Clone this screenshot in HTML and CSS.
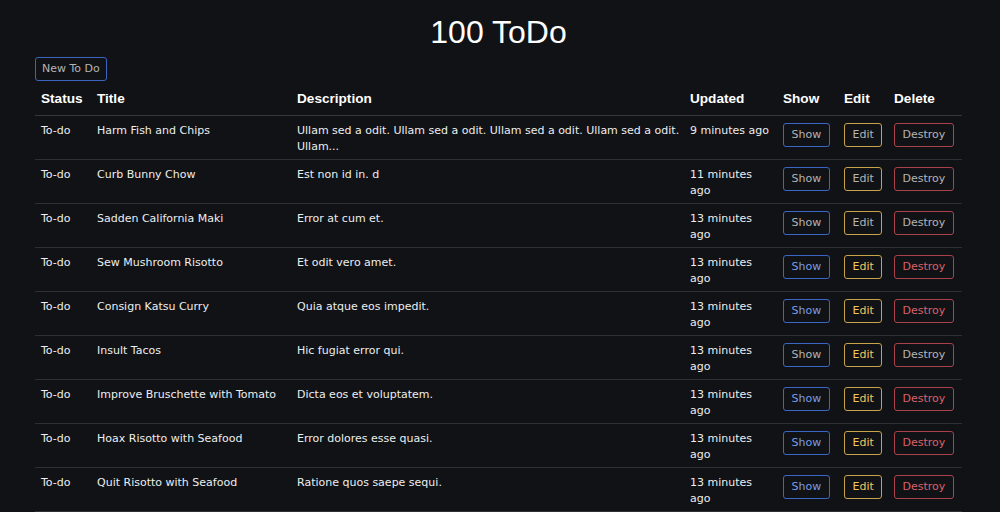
FILE: index.html
```html
<!DOCTYPE html>
<html lang="en">
<head>
<meta charset="utf-8">
<title>100 ToDo</title>
<link rel="stylesheet" href="styles.css">
</head>
<body>
<main class="container">
  <h1 class="page-title">100 ToDo</h1>
  <a class="btn btn-new" href="#">New To Do</a>
  <table class="todo-table">
    <colgroup>
      <col class="c-status"><col class="c-title"><col class="c-desc"><col class="c-upd"><col class="c-show"><col class="c-edit"><col class="c-del">
    </colgroup>
    <thead>
      <tr><th>Status</th><th>Title</th><th>Description</th><th>Updated</th><th>Show</th><th>Edit</th><th>Delete</th></tr>
    </thead>
    <tbody>
      <tr><td>To-do</td><td>Harm Fish and Chips</td><td class="desc">Ullam sed a odit. Ullam sed a odit. Ullam sed a odit. Ullam sed a odit. Ullam...</td><td>9 minutes ago</td>
        <td><a class="btn btn-blue" href="#">Show</a></td><td><a class="btn btn-yellow" href="#">Edit</a></td><td><a class="btn btn-red" href="#">Destroy</a></td></tr>
      <tr><td>To-do</td><td>Curb Bunny Chow</td><td class="desc">Est non id in. d</td><td>11 minutes ago</td>
        <td><a class="btn btn-blue" href="#">Show</a></td><td><a class="btn btn-yellow" href="#">Edit</a></td><td><a class="btn btn-red" href="#">Destroy</a></td></tr>
      <tr><td>To-do</td><td>Sadden California Maki</td><td class="desc">Error at cum et.</td><td>13 minutes ago</td>
        <td><a class="btn btn-blue" href="#">Show</a></td><td><a class="btn btn-yellow" href="#">Edit</a></td><td><a class="btn btn-red" href="#">Destroy</a></td></tr>
      <tr><td>To-do</td><td>Sew Mushroom Risotto</td><td class="desc">Et odit vero amet.</td><td>13 minutes ago</td>
        <td><a class="btn btn-blue lit" href="#">Show</a></td><td><a class="btn btn-yellow lit" href="#">Edit</a></td><td><a class="btn btn-red lit" href="#">Destroy</a></td></tr>
      <tr><td>To-do</td><td>Consign Katsu Curry</td><td class="desc">Quia atque eos impedit.</td><td>13 minutes ago</td>
        <td><a class="btn btn-blue lit" href="#">Show</a></td><td><a class="btn btn-yellow lit" href="#">Edit</a></td><td><a class="btn btn-red lit" href="#">Destroy</a></td></tr>
      <tr><td>To-do</td><td>Insult Tacos</td><td class="desc">Hic fugiat error qui.</td><td>13 minutes ago</td>
        <td><a class="btn btn-blue" href="#">Show</a></td><td><a class="btn btn-yellow lit" href="#">Edit</a></td><td><a class="btn btn-red" href="#">Destroy</a></td></tr>
      <tr><td>To-do</td><td>Improve Bruschette with Tomato</td><td class="desc">Dicta eos et voluptatem.</td><td>13 minutes ago</td>
        <td><a class="btn btn-blue lit" href="#">Show</a></td><td><a class="btn btn-yellow lit" href="#">Edit</a></td><td><a class="btn btn-red lit" href="#">Destroy</a></td></tr>
      <tr><td>To-do</td><td>Hoax Risotto with Seafood</td><td class="desc">Error dolores esse quasi.</td><td>13 minutes ago</td>
        <td><a class="btn btn-blue lit" href="#">Show</a></td><td><a class="btn btn-yellow lit" href="#">Edit</a></td><td><a class="btn btn-red lit" href="#">Destroy</a></td></tr>
      <tr><td>To-do</td><td>Quit Risotto with Seafood</td><td class="desc">Ratione quos saepe sequi.</td><td>13 minutes ago</td>
        <td><a class="btn btn-blue lit" href="#">Show</a></td><td><a class="btn btn-yellow lit" href="#">Edit</a></td><td><a class="btn btn-red lit" href="#">Destroy</a></td></tr>
    </tbody>
  </table>
</main>
</body>
</html>
```
FILE: styles.css
```css
html, body {
  margin: 0;
  padding: 0;
  background: #111215;
  color: #eceef0;
  font-family: "DejaVu Sans", Verdana, sans-serif;
  font-size: 11px;
  line-height: 16px;
}

.container {
  width: 927px;
  margin: 0 0 0 35px;
}

.page-title {
  margin: 14px 0 0;
  font-family: "Liberation Sans", Arial, sans-serif;
  font-weight: 400;
  font-size: 32px;
  line-height: 36px;
  text-align: center;
  color: #ffffff;
}

.btn {
  display: inline-block;
  box-sizing: border-box;
  height: 24px;
  padding: 3px 7.5px;
  border: 1px solid;
  border-radius: 3px;
  color: #b3b4b6;
  text-decoration: none;
  font-size: 11px;
  line-height: 16px;
  white-space: nowrap;
  vertical-align: top;
}

.btn-new {
  margin-top: 7px;
  padding: 3px 6px;
  border-color: #3a64c0;
}

.btn-blue { border-color: #3a66c4; }
.btn-yellow { border-color: #c7a44c; }
.btn-red { border-color: #aa424c; }
.btn-blue.lit { color: #7a9ce6; }
.btn-yellow.lit { color: #f0c75d; }
.btn-red.lit { color: #d9626c; }

.todo-table {
  width: 927px;
  margin-top: 1px;
  border-collapse: collapse;
  table-layout: fixed;
}

.c-status { width: 56px; }
.c-title { width: 200px; }
.c-desc { width: 393px; }
.c-upd { width: 93px; }
.c-show { width: 61px; }
.c-edit { width: 50px; }
.c-del { width: 74px; }

.todo-table th {
  text-align: left;
  font-family: "Liberation Sans", Arial, sans-serif;
  font-weight: 700;
  font-size: 13.6px;
  line-height: 17px;
  color: #ffffff;
  padding: 8px 6px;
  border-bottom: 1px solid #34373b;
}

.todo-table td {
  vertical-align: top;
  padding: 7px 6px 4px;
  border-bottom: 1px solid #2c2f33;
}

.todo-table td.desc {
  padding-right: 0;
}
```
